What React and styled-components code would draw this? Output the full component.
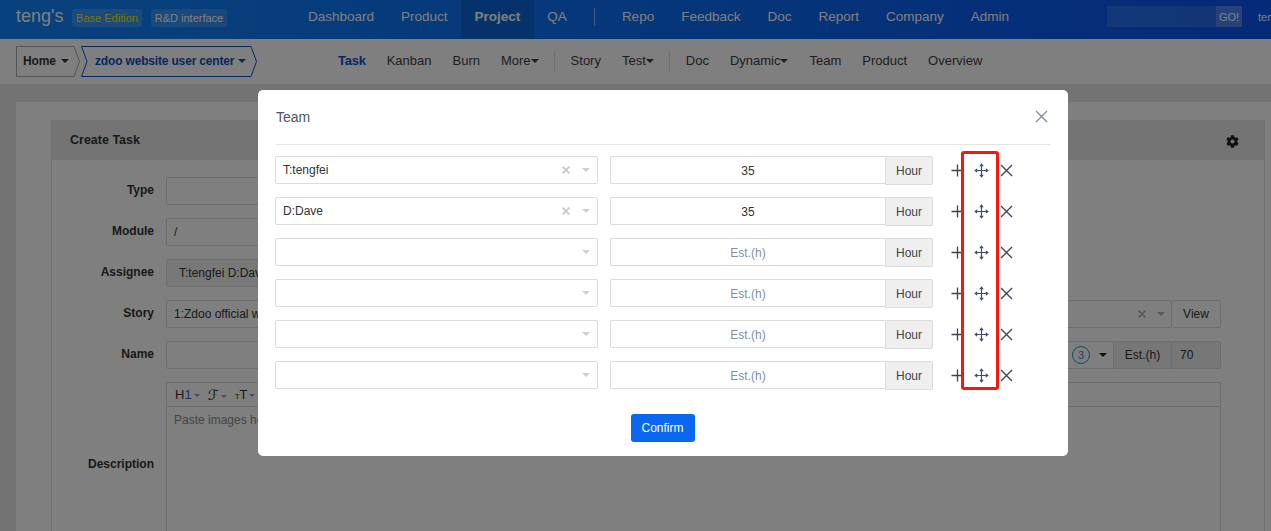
import React from 'react'
import styled, { createGlobalStyle } from 'styled-components'
import { FaCog } from 'react-icons/fa'

const GlobalStyle = createGlobalStyle`
  html, body {
    margin: 0;
    height: 100%;
    overflow: hidden;
  }
  body {
    font-family: "Liberation Sans", Arial, sans-serif;
    font-size: 12px;
    color: #333;
  }
  * {
    box-sizing: border-box;
  }
`

const headerItems = [
  { label: 'Dashboard' },
  { label: 'Product' },
  { label: 'Project', active: true },
  { label: 'QA' },
  { divider: true },
  { label: 'Repo' },
  { label: 'Feedback' },
  { label: 'Doc' },
  { label: 'Report' },
  { label: 'Company' },
  { label: 'Admin' },
]

const subItems = [
  { label: 'Task', active: true },
  { label: 'Kanban' },
  { label: 'Burn' },
  { label: 'More', caret: true },
  { divider: true },
  { label: 'Story' },
  { label: 'Test', caret: true },
  { divider: true },
  { label: 'Doc' },
  { label: 'Dynamic', caret: true },
  { label: 'Team' },
  { label: 'Product' },
  { label: 'Overview' },
]

const teamRows = [
  { name: 'T:tengfei', hours: '35' },
  { name: 'D:Dave', hours: '35' },
  {},
  {},
  {},
  {},
]

const Caret = styled.i`
  display: inline-block;
  width: 0;
  height: 0;
  margin-left: ${(p) => p.$gap || 0}px;
  border-top: 4px solid ${(p) => p.$color || 'currentColor'};
  border-left: 4px solid transparent;
  border-right: 4px solid transparent;
`

const PlusIcon = () => (
  <svg width="13" height="13" viewBox="0 0 13 13" fill="none" stroke="#3f4350" strokeWidth="1.3">
    <path d="M6.5 .5v12M.5 6.5h12" />
  </svg>
)

const MoveIcon = () => (
  <svg width="15" height="15" viewBox="0 0 15 15" fill="none" stroke="#3d4f6e" strokeWidth="1.2">
    <path d="M7.5 2v11M2 7.5h11" />
    <path d="M7.5 .2 9.8 3.2H5.2zM7.5 14.8 9.8 11.8H5.2zM.2 7.5 3.2 5.2v4.6zM14.8 7.5 11.8 5.2v4.6z" fill="#3d4f6e" stroke="none" />
  </svg>
)

const CloseIcon = ({ size = 13, color = '#3f4658', weight = 1.4 }) => (
  <svg width={size} height={size} viewBox="0 0 13 13" fill="none" stroke={color} strokeWidth={weight}>
    <path d="M1 1l11 11M12 1 1 12" />
  </svg>
)

const Crumb = ({ width, color, notched, children }) => (
  <CrumbBox $width={width}>
    <svg width={width} height="31" viewBox={`0 0 ${width} 31`} fill="none" stroke={color}>
      <path d={`M.5 .5H${width - 6}L${width - 0.5} 15.5 ${width - 6} 30.5H.5${notched ? 'L6 15.5z' : 'z'}`} />
    </svg>
    {children}
  </CrumbBox>
)

export default function App() {
  return (
    <>
      <GlobalStyle />
      <Page>
        <Header>
          <Brand>teng's</Brand>
          <EditionBadge $width={70} $edition>Base Edition</EditionBadge>
          <EditionBadge $width={76}>R&amp;D interface</EditionBadge>
          <HeaderNav>
            {headerItems.map((item, i) =>
              item.divider ? (
                <HeaderDivider key={i} />
              ) : (
                <HeaderLink key={i} $active={item.active}>{item.label}</HeaderLink>
              )
            )}
          </HeaderNav>
          <Search>
            <SearchInput />
            <SearchButton>GO!</SearchButton>
          </Search>
          <UserName>tengfei</UserName>
        </Header>

        <SubNav>
          <Crumbs>
            <Crumb width={64} color="#a8a8a8">
              <CrumbText>Home<Caret $gap={5} /></CrumbText>
            </Crumb>
            <Crumb width={176} color="#0c4fc0" notched>
              <CrumbText $project>zdoo website user center<Caret $gap={4} /></CrumbText>
            </Crumb>
          </Crumbs>
          <SubLinks>
            {subItems.map((item, i) =>
              item.divider ? (
                <SubDivider key={i} />
              ) : (
                <SubLink key={i} $active={item.active}>
                  {item.label}
                  {item.caret && <Caret />}
                </SubLink>
              )
            )}
          </SubLinks>
        </SubNav>

        <Main>
          <Card>
            <Panel>
              <PanelHeader>
                <PanelTitle>Create Task</PanelTitle>
                <PanelGear size={13} />
              </PanelHeader>
              <Form>
                <FormRow>
                  <FormLabel>Type</FormLabel>
                  <Field $short />
                </FormRow>
                <FormRow>
                  <FormLabel>Module</FormLabel>
                  <Field $short>/</Field>
                </FormRow>
                <FormRow>
                  <FormLabel>Assignee</FormLabel>
                  <Field $short $muted>T:tengfei D:Dave</Field>
                </FormRow>
                <FormRow>
                  <FormLabel>Story</FormLabel>
                  <FieldGroup>
                    <Field>
                      1:Zdoo official website
                      <FieldTail>
                        <CloseIcon size={8} color="#b5b5b5" weight={3} />
                        <Caret $gap={11} $color="#b5b5b5" />
                      </FieldTail>
                    </Field>
                    <Addon $width={50} $plain>View</Addon>
                  </FieldGroup>
                </FormRow>
                <FormRow>
                  <FormLabel>Name</FormLabel>
                  <FieldGroup>
                    <Field>
                      <FieldTail>
                        <Priority>3</Priority>
                        <Caret $gap={9} $color="#222" />
                      </FieldTail>
                    </Field>
                    <Addon $width={59}>Est.(h)</Addon>
                    <Addon $width={50} $plain $left>70</Addon>
                  </FieldGroup>
                </FormRow>
                <FormRow>
                  <FormLabel>Description</FormLabel>
                  <Editor>
                    <EditorToolbar>
                      <ToolItem>H<b>1</b><Caret $gap={2} $color="#999" /></ToolItem>
                      <ToolItem $script>ℱ<Caret $gap={2} $color="#999" /></ToolItem>
                      <ToolItem><small>T</small>T<Caret $gap={2} $color="#999" /></ToolItem>
                    </EditorToolbar>
                    <EditorBody>Paste images here</EditorBody>
                  </Editor>
                </FormRow>
              </Form>
            </Panel>
          </Card>
        </Main>

        <Overlay>
          <Modal>
            <ModalHeader>
              <ModalTitle>Team</ModalTitle>
              <CloseIcon size={13} color="#7b8698" weight={1.2} />
            </ModalHeader>
            <TeamList>
              {teamRows.map((row, i) => (
                <TeamRow key={i}>
                  <Select>
                    {row.name}
                    <SelectTail>
                      {row.name && <CloseIcon size={8} color="#c9c9c9" weight={3} />}
                      <Caret $gap={12} $color="#ccd0d8" />
                    </SelectTail>
                  </Select>
                  <HoursGroup>
                    <HoursInput $empty={!row.hours}>{row.hours || 'Est.(h)'}</HoursInput>
                    <HourUnit>Hour</HourUnit>
                  </HoursGroup>
                  <RowActions>
                    <ActionButton><PlusIcon /></ActionButton>
                    <ActionButton><MoveIcon /></ActionButton>
                    <ActionButton><CloseIcon /></ActionButton>
                  </RowActions>
                </TeamRow>
              ))}
            </TeamList>
            <ModalFooter>
              <ConfirmButton>Confirm</ConfirmButton>
            </ModalFooter>
            <Highlight />
          </Modal>
        </Overlay>
      </Page>
    </>
  )
}

const Page = styled.div`
  position: relative;
  width: 1271px;
  height: 531px;
  overflow: hidden;
  background: #e6e6e6;
`

const Header = styled.header`
  display: flex;
  align-items: center;
  height: 39px;
  padding: 0 0 6px 16px;
  background: linear-gradient(90deg, #1184fa 0%, #0b6ef4 50%, #0a54f0 100%);
  color: #fff;
`

const Brand = styled.div`
  flex: none;
  width: 56px;
  font-size: 18px;
  color: #fff;
`

const EditionBadge = styled.span`
  display: inline-flex;
  align-items: center;
  justify-content: center;
  flex: none;
  width: ${(p) => p.$width}px;
  height: 18px;
  margin: 2px 9px 0 0;
  border-radius: 3px;
  font-size: 11px;
  white-space: nowrap;
  background: rgba(255, 255, 255, 0.16);
  color: ${(p) => (p.$edition ? '#f2ee00' : '#fff')};
`

const HeaderNav = styled.nav`
  display: flex;
  flex: none;
  align-items: center;
  height: 39px;
  margin: 0 0 -6px 58.5px;
`

const HeaderLink = styled.a`
  display: flex;
  align-items: center;
  height: 39px;
  padding: 0 13.5px 7px;
  font-size: 13.5px;
  font-weight: ${(p) => (p.$active ? 700 : 400)};
  color: #fff;
  background: ${(p) => (p.$active ? 'rgba(0, 0, 0, 0.12)' : 'transparent')};
`

const HeaderDivider = styled.span`
  width: 1px;
  height: 18px;
  margin: 0 13.5px 5px;
  background: rgba(255, 255, 255, 0.5);
`

const Search = styled.div`
  display: flex;
  flex: none;
  height: 21px;
  margin-left: 84.5px;
`

const SearchInput = styled.div`
  width: 109px;
  background: rgba(255, 255, 255, 0.12);
`

const SearchButton = styled.div`
  display: flex;
  align-items: center;
  justify-content: center;
  width: 26px;
  font-size: 11px;
  background: rgba(255, 255, 255, 0.28);
`

const UserName = styled.div`
  flex: none;
  margin-left: 16px;
  font-size: 11px;
  white-space: nowrap;
`

const SubNav = styled.div`
  display: flex;
  align-items: center;
  height: 45px;
  padding-left: 16px;
  background: #fff;
`

const Crumbs = styled.div`
  display: flex;
  gap: 1px;
`

const CrumbBox = styled.div`
  position: relative;
  display: flex;
  align-items: center;
  width: ${(p) => p.$width}px;
  height: 31px;

  svg {
    position: absolute;
    top: 0;
    left: 0;
  }
`

const CrumbText = styled.span`
  position: relative;
  top: -1px;
  padding-left: ${(p) => (p.$project ? 14 : 7)}px;
  font-size: 12px;
  font-weight: 700;
  letter-spacing: -0.17px;
  white-space: nowrap;
  color: ${(p) => (p.$project ? '#0c4fc0' : '#333')};
  i {
    vertical-align: 2px;
  }
`

const SubLinks = styled.div`
  display: flex;
  align-items: center;
  margin: 0 0 2px 81px;
  gap: 21px;
`

const SubLink = styled.a`
  font-size: 13px;
  white-space: nowrap;
  font-weight: ${(p) => (p.$active ? 700 : 400)};
  letter-spacing: ${(p) => (p.$active ? '-0.25px' : '0')};
  color: ${(p) => (p.$active ? '#0c4fc0' : '#3c3c3c')};
  i {
    vertical-align: 2px;
  }
`

const SubDivider = styled.span`
  width: 1px;
  height: 22px;
  margin: 0 -5.5px;
  background: #e2e2e2;
`

const Main = styled.main`
  padding: 18px 0 0 16px;
`

const Card = styled.section`
  padding: 18px 6px 0 35px;
  height: 430px;
  background: #fff;
`

const Panel = styled.div`
  border-left: 1px solid #e2e2e2;
  border-right: 1px solid #e2e2e2;
`

const PanelHeader = styled.div`
  display: flex;
  align-items: center;
  justify-content: space-between;
  height: 40px;
  padding: 0 25px 0 18px;
  background: #e8e8e8;
`

const PanelTitle = styled.h2`
  margin: 0;
  font-size: 12.5px;
  font-weight: 700;
  color: #333;
`

const PanelGear = styled(FaCog)`
  margin-top: 2px;
  color: #1d2027;
`

const Form = styled.div`
  display: flex;
  flex-direction: column;
  gap: 13px;
  padding: 17px 43px 0 0;
`

const FormRow = styled.div`
  display: grid;
  grid-template-columns: 102px 1fr;
  gap: 12px;
  align-items: center;
`

const FormLabel = styled.label`
  margin-top: -2px;
  font-weight: 700;
  text-align: right;
  color: #333;
`

const Field = styled.div`
  flex: 1;
  display: flex;
  align-items: center;
  width: ${(p) => (p.$short ? '520px' : 'auto')};
  height: 28px;
  padding: 0 ${(p) => (p.$muted ? 12 : 6)}px 0 ${(p) => (p.$muted ? 12 : 7)}px;
  border: 1px solid #dcdcdc;
  border-radius: 2px;
  background: ${(p) => (p.$muted ? '#f0f0f0' : '#fff')};
`

const FieldGroup = styled.div`
  display: flex;
`

const FieldTail = styled.span`
  display: flex;
  align-items: center;
  margin-left: auto;
`

const Priority = styled.span`
  display: flex;
  align-items: center;
  justify-content: center;
  width: 18px;
  height: 18px;
  border: 1.5px solid #2492e0;
  border-radius: 50%;
  font-size: 11px;
  color: #2492e0;
`

const Addon = styled.div`
  display: flex;
  align-items: center;
  justify-content: ${(p) => (p.$left ? 'flex-start' : 'center')};
  width: ${(p) => p.$width}px;
  height: 28px;
  padding: 0 ${(p) => (p.$left ? 8 : 0)}px;
  margin-left: -1px;
  border: 1px solid #dcdcdc;
  border-radius: 2px;
  background: ${(p) => (p.$plain && !p.$left ? '#fff' : '#eee')};
`

const Editor = styled.div`
  height: 166px;
  border: 1px solid #dcdcdc;
`

const EditorToolbar = styled.div`
  display: flex;
  align-items: center;
  gap: 8px;
  height: 24px;
  padding: 0 8px;
  border-bottom: 1px solid #dcdcdc;
`

const ToolItem = styled.span`
  font-size: ${(p) => (p.$script ? 14 : 13)}px;
  font-family: ${(p) => (p.$script ? '"DejaVu Sans", serif' : 'inherit')};
  color: #333;
  b {
    font-weight: 400;
    color: #3269b8;
  }
  small {
    font-size: 8px;
  }
  i {
    vertical-align: 2px;
    border-top-width: 3px;
    border-left-width: 3px;
    border-right-width: 3px;
  }
`

const EditorBody = styled.div`
  padding: 6px 7px;
  color: #888;
`

const Overlay = styled.div`
  position: absolute;
  inset: 0;
  padding: 90px 0 0 258px;
  background: rgba(0, 0, 0, 0.5);
`

const Modal = styled.div`
  position: relative;
  width: 810px;
  height: 366px;
  padding: 0 18px 14px 17px;
  border-radius: 5px;
  background: #fff;
`

const ModalHeader = styled.div`
  display: flex;
  align-items: center;
  justify-content: space-between;
  height: 55px;
  margin-left: 1px;
  padding: 0 2px 1px 0;
  border-bottom: 1px solid #e4e4e4;
`

const ModalTitle = styled.h3`
  margin: 0;
  font-size: 14px;
  font-weight: 400;
  color: #4a5468;
`

const TeamList = styled.div`
  display: flex;
  flex-direction: column;
  gap: 13px;
  margin-top: 11px;
`

const TeamRow = styled.div`
  display: flex;
  align-items: flex-start;
  height: 28px;
`

const Select = styled.div`
  display: flex;
  align-items: center;
  width: 323px;
  height: 28px;
  padding: 0 7px;
  border: 1px solid #dcdcdc;
  border-radius: 2px;
  color: #333;
`

const SelectTail = styled.span`
  display: flex;
  align-items: center;
  margin-left: auto;
`

const HoursGroup = styled.div`
  display: flex;
  width: 323px;
  margin-left: 12px;
`

const HoursInput = styled.div`
  flex: 1;
  display: flex;
  align-items: center;
  justify-content: center;
  height: 28px;
  padding-top: 2px;
  border: 1px solid #dcdcdc;
  border-right: 0;
  border-radius: 2px 0 0 2px;
  color: ${(p) => (p.$empty ? '#7f8ea8' : '#333')};
`

const HourUnit = styled.div`
  display: flex;
  align-items: center;
  justify-content: center;
  width: 48px;
  height: 29px;
  border: 1px solid #dcdcdc;
  border-radius: 0 2px 2px 0;
  background: #efefef;
  color: #444;
`

const RowActions = styled.div`
  display: flex;
  margin-left: 12px;
`

const ActionButton = styled.span`
  display: flex;
  align-items: center;
  justify-content: center;
  width: 24.5px;
  height: 29px;
`

const ModalFooter = styled.div`
  display: flex;
  justify-content: center;
  margin-top: 25px;
`

const ConfirmButton = styled.button`
  width: 64px;
  height: 28px;
  padding: 0;
  border: 0;
  border-radius: 3px;
  font: 12px "Liberation Sans", Arial, sans-serif;
  color: #fff;
  background: #0c67f0;
`

const Highlight = styled.div`
  position: absolute;
  top: 61px;
  left: 703px;
  width: 38px;
  height: 239px;
  border: 3px solid #f7170f;
  border-radius: 3px;
`
